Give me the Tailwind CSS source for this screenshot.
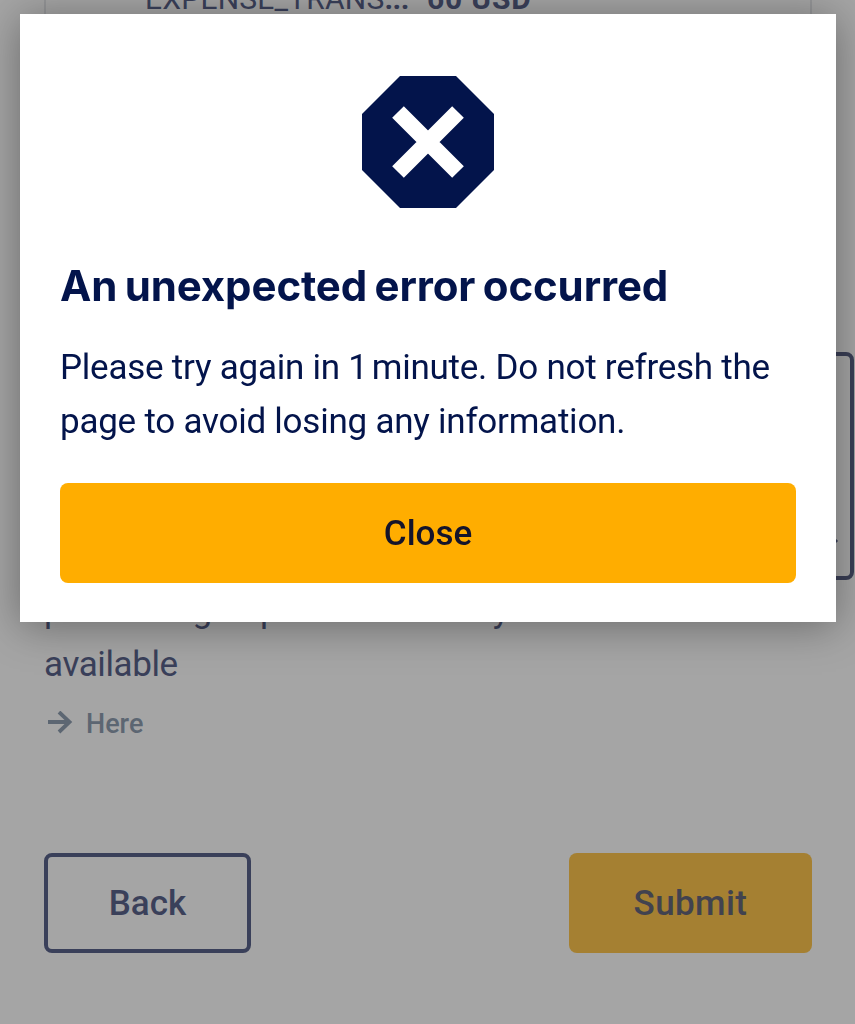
<!DOCTYPE html>
<html lang="en">
<head>
    <meta charset="UTF-8">
    <meta name="viewport" content="width=device-width, initial-scale=1.0">
    <title>Transaction dispute</title>
    <script src="https://cdn.jsdelivr.net/npm/@tailwindcss/browser@4"></script>
</head>
<body class="h-screen overflow-hidden bg-[#a5a5a5] font-['Roboto',sans-serif] text-[#3a405a]">
    <main class="h-[1024px] overflow-hidden pl-11">
        <!-- Transaction card -->
        <section class="w-[768px] h-[280px] border-x-2 border-[#959698] pl-[99px]">
            <div class="flex gap-[18px] -mt-[21px] text-[30px] leading-[40px] whitespace-nowrap">
                <span class="tracking-[0.2px]">EXPENSE_TRANS<b class="tracking-[-0.5px]">...</b></span>
                <span class="font-bold tracking-[0.8px]">60 USD</span>
            </div>
        </section>

        <!-- Upload box -->
        <section class="mt-[93px] w-[810px] h-[228px] border-4 border-[#3a3f56] rounded-lg flex justify-end">
            <svg class="w-3 h-3 mt-[176px] mr-[11px]" viewBox="0 0 12 12" fill="none" stroke="currentColor" stroke-width="3">
                <path d="M2 2l8 8"></path>
            </svg>
        </section>

        <p class="mt-[4px] w-[720px] text-[35px] leading-[54px] tracking-[-0.4px] [word-spacing:3px]">processing is possible directly<br>available</p>
        <a href="#" class="mt-[12px] flex items-center gap-[11px] text-[27px] leading-[40px] font-medium text-[#5c6672]">
            <svg class="w-[27px] h-[27px] ml-1" viewBox="0 0 27 27" fill="none" stroke="currentColor" stroke-width="3.8">
                <path d="M0 11h22M11 1l10.500 10L11 21"></path>
            </svg>
            <span>Here</span>
        </a>

        <div class="mt-[109px] w-[768px] flex justify-between">
            <button class="w-[207px] h-[100px] border-4 border-[#3a405a] rounded-lg pt-[2px] text-[35px] font-medium">Back</button>
            <button class="w-[243px] h-[100px] rounded-lg bg-[#a58032] pt-[2px] text-[35px] tracking-[0.4px] font-medium text-[#41424f]">Submit</button>
        </div>
    </main>

    <!-- Error dialog -->
    <div class="fixed inset-0 pt-[14px] pl-5">
        <div role="dialog" class="w-[816px] h-[608px] bg-white px-10 pt-[62px] text-[#03144b] shadow-[0_4px_40px_rgba(0,0,0,0.36)]">
            <svg class="w-[132px] h-[132px] mx-auto" viewBox="0 0 132 132">
                <path fill="#03144b" d="M38 0h56l38 38v56l-38 38H38L0 94V38z"></path>
                <path stroke="#fff" stroke-width="16.500" d="M36 36l60 60M96 36l-60 60"></path>
            </svg>
            <h1 class="mt-[51px] font-['Inter',sans-serif] text-[42px] leading-[54px] font-bold tracking-[-0.1px] [word-spacing:-2.500px] whitespace-nowrap">An unexpected error occurred</h1>
            <p class="mt-[28px] text-[35px] leading-[54px] tracking-[-0.24px] whitespace-nowrap">Please try again in <span class="tracking-[-2.500px]">1 </span>minute. Do not refresh the<br>page to avoid losing any information.</p>
            <button class="mt-[34px] w-full h-[100px] rounded-lg bg-[#ffad00] pt-[2px] text-[35px] font-medium text-[#14142b]">Close</button>
        </div>
    </div>
</body>
</html>
